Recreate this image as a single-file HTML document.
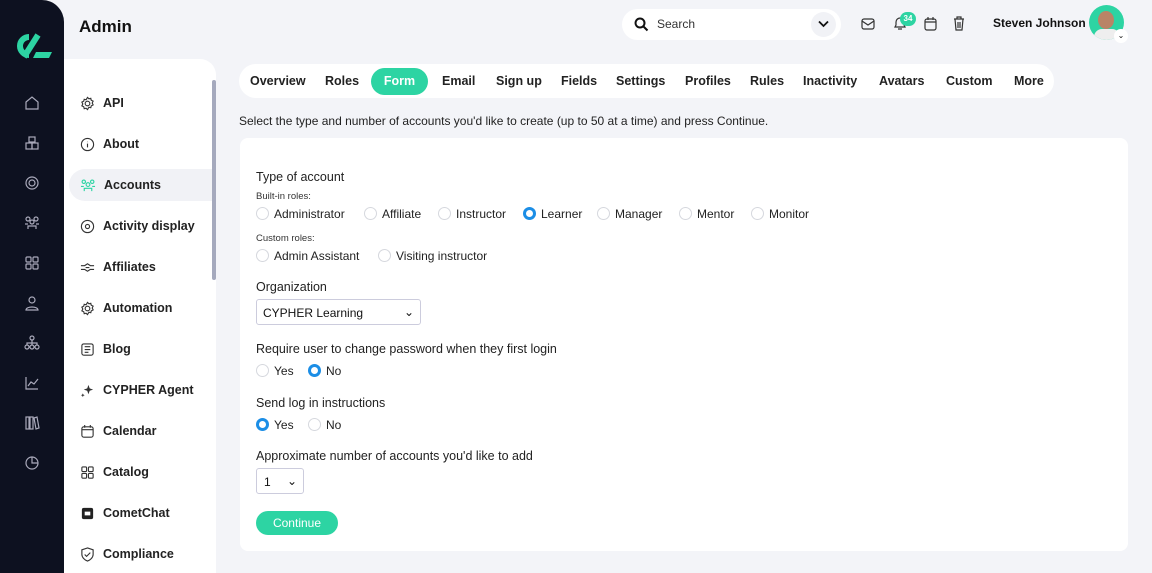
<!DOCTYPE html>
<html><head><style>
*{margin:0;padding:0;box-sizing:border-box}
body{width:1152px;height:573px;overflow:hidden;background:#f3f4f8;font-family:"Liberation Sans",sans-serif;color:#111;position:relative;font-size:13px}
.abs{position:absolute}
.side{left:0;top:0;width:64px;height:573px;background:#0d1120;border-top-right-radius:22px}
.si{position:absolute;left:24px;width:16px;height:16px}
.menu{left:64px;top:59px;width:152px;height:514px;background:#fff;border-top-right-radius:16px}
.mi{position:absolute;left:16px;height:32px;width:136px;display:flex;align-items:center;font-size:12.5px;font-weight:bold;color:#222}
.mi svg{margin-right:8px;margin-left:0}
.mi.act{background:#f1f2f6;border-radius:16px 0 0 16px;left:5px;padding-left:11px;width:143px}
.tabs{left:239px;top:64px;width:815px;height:34px;background:#fff;border-radius:17px}
.tab{position:absolute;top:10px;font-size:12.5px;font-weight:bold;color:#222}
.card{left:240px;top:138px;width:888px;height:413px;background:#fff;border-radius:8px}
.lbl{position:absolute;font-size:12.5px;color:#222}
.sm{position:absolute;font-size:9.5px;color:#333}
.r{position:absolute;width:13px;height:13px;border:1px solid #d6d8de;border-radius:50%;background:#fff}
.r.on{border:3.5px solid #1c8ee6}
.rl{position:absolute;font-size:12px;color:#222}
</style></head><body>
<div class="abs side">
<svg class="abs" style="left:12px;top:33px" width="40" height="26" viewBox="0 0 40 26"><path d="M17 4 A9 9 0 1 0 17 22" fill="none" stroke="#2dd4a3" stroke-width="6"/><path d="M26 2 L12 24" stroke="#2dd4a3" stroke-width="6"/><path d="M24 19 H40 L37 25 H21Z" fill="#2dd4a3"/></svg>
<svg class="si" style="top:95px" viewBox="0 0 16 16" fill="none" stroke="#aab" stroke-width="1.2"><path d="M2 7 8 2l6 5v7H2z"/></svg>
<svg class="si" style="top:135px" viewBox="0 0 16 16" fill="none" stroke="#aab" stroke-width="1.2"><rect x="5" y="2" width="6" height="5"/><rect x="2" y="8" width="6" height="6"/><rect x="8" y="8" width="6" height="6"/></svg>
<svg class="si" style="top:175px" viewBox="0 0 16 16" fill="none" stroke="#aab" stroke-width="1.2"><circle cx="8" cy="8" r="6"/><circle cx="8" cy="8" r="3"/></svg>
<svg class="si" style="top:215px" viewBox="0 0 16 16" fill="none" stroke="#aab" stroke-width="1.2"><circle cx="4" cy="4" r="2"/><circle cx="12" cy="4" r="2"/><circle cx="8" cy="7" r="2"/><path d="M4 14v-3h8v3M1 9h3M12 9h3"/></svg>
<svg class="si" style="top:255px" viewBox="0 0 16 16" fill="none" stroke="#aab" stroke-width="1.2"><rect x="2" y="2" width="5" height="5" rx="1"/><rect x="9" y="2" width="5" height="5" rx="1"/><rect x="2" y="9" width="5" height="5" rx="1"/><rect x="9" y="9" width="5" height="5" rx="1"/></svg>
<svg class="si" style="top:295px" viewBox="0 0 16 16" fill="none" stroke="#aab" stroke-width="1.2"><circle cx="8" cy="5" r="3"/><path d="M2 15c0-4 12-4 12 0z"/></svg>
<svg class="si" style="top:335px" viewBox="0 0 16 16" fill="none" stroke="#aab" stroke-width="1.2"><circle cx="8" cy="3" r="2"/><circle cx="3" cy="12" r="2"/><circle cx="8" cy="12" r="2"/><circle cx="13" cy="12" r="2"/><path d="M8 5v5M3 10V8h10v2"/></svg>
<svg class="si" style="top:375px" viewBox="0 0 16 16" fill="none" stroke="#aab" stroke-width="1.2"><path d="M2 2v12h12M4 11l3-4 3 2 4-5"/></svg>
<svg class="si" style="top:415px" viewBox="0 0 16 16" fill="none" stroke="#aab" stroke-width="1.2"><rect x="2" y="2" width="3" height="12"/><rect x="6" y="2" width="3" height="12"/><path d="M10 3l3-1 2 11-3 1z"/></svg>
<svg class="si" style="top:455px" viewBox="0 0 16 16" fill="none" stroke="#aab" stroke-width="1.2"><circle cx="8" cy="8" r="6"/><path d="M8 2v6h6"/></svg>
</div>
<div class="abs" style="left:79px;top:17px;font-size:17px;font-weight:bold">Admin</div>
<div class="abs" style="left:622px;top:9px;width:219px;height:31px;background:#fff;border-radius:16px">
<svg class="abs" style="left:12px;top:8px" width="15" height="15" viewBox="0 0 15 15" fill="none" stroke="#111" stroke-width="2"><circle cx="6" cy="6" r="4.5"/><path d="M9.5 9.5l4 4"/></svg>
<span class="abs" style="left:35px;top:8px;font-size:12px;color:#333">Search</span>
<div class="abs" style="left:189px;top:3px;width:25px;height:25px;border-radius:50%;background:#f1f2f6"></div>
<svg class="abs" style="left:196px;top:11px" width="11" height="8" viewBox="0 0 11 8" fill="none" stroke="#111" stroke-width="1.8"><path d="M1 1.5l4.5 4.5 4.5-4.5"/></svg>
</div>
<svg class="abs" style="left:861px;top:18px" width="14" height="12" viewBox="0 0 14 12" fill="none" stroke="#333" stroke-width="1.2"><rect x="1" y="1" width="12" height="10" rx="2"/><path d="M1 3l6 4 6-4"/></svg>
<svg class="abs" style="left:893px;top:16px" width="14" height="15" viewBox="0 0 14 15" fill="none" stroke="#333" stroke-width="1.2"><path d="M2 11h10l-1-2V6a4 4 0 0 0-8 0v3z M5 13h4"/></svg>
<div class="abs" style="left:900px;top:12px;width:16px;height:14px;border-radius:7px;background:#2dd4a3;color:#fff;font-size:8px;font-weight:bold;text-align:center;line-height:14px">34</div>
<svg class="abs" style="left:924px;top:16px" width="13" height="15" viewBox="0 0 13 15" fill="none" stroke="#333" stroke-width="1.2"><rect x="1" y="3" width="11" height="11" rx="2"/><path d="M1 6h11M4 1v3M9 1v3"/></svg>
<svg class="abs" style="left:953px;top:16px" width="12" height="15" viewBox="0 0 12 15" fill="none" stroke="#333" stroke-width="1.2"><path d="M1 3h10M4 3V1h4v2M2 3l1 11h6l1-11M5 6v6M7 6v6"/></svg>
<div class="abs" style="left:993px;top:16px;font-size:12px;font-weight:bold">Steven Johnson</div>
<div class="abs" style="left:1089px;top:5px;width:35px;height:35px;border-radius:50%;background:#2dd4a3;overflow:hidden"><div style="position:absolute;left:9px;top:6px;width:16px;height:18px;border-radius:50%;background:#b98466"></div><div style="position:absolute;left:5px;top:24px;width:26px;height:16px;border-radius:8px;background:#eee"></div></div>
<div class="abs" style="left:1114px;top:29px;width:14px;height:14px;border-radius:50%;background:#fff;font-size:8px;text-align:center;line-height:14px">⌄</div>

<div class="abs menu">
<div class="mi" style="top:28px"><svg width="15" height="15" viewBox="0 0 16 16" fill="none" stroke="#333" stroke-width="1.2"><circle cx="8" cy="8" r="2.5"/><path d="M8 1.5l1.5 1.5 2-.5.5 2 2 1-1 2 1 2-2 1-.5 2-2-.5L8 14.5 6.5 13l-2 .5-.5-2-2-1 1-2-1-2 2-1 .5-2 2 .5z"/></svg>API</div>
<div class="mi" style="top:69px"><svg width="15" height="15" viewBox="0 0 16 16" fill="none" stroke="#333" stroke-width="1.2"><circle cx="8" cy="8" r="6.5"/><path d="M8 7v4M8 5v.5"/></svg>About</div>
<div class="mi act" style="top:110px"><svg width="16" height="15" viewBox="0 0 16 16" fill="none" stroke="#2dd4a3" stroke-width="1.2"><circle cx="3.5" cy="4" r="1.8"/><circle cx="12.5" cy="4" r="1.8"/><circle cx="8" cy="7" r="2"/><path d="M4 14v-3h8v3M0.5 9h3M12.5 9h3"/></svg>Accounts</div>
<div class="mi" style="top:151px"><svg width="15" height="15" viewBox="0 0 16 16" fill="none" stroke="#333" stroke-width="1.2"><circle cx="8" cy="8" r="6.5"/><circle cx="8" cy="8" r="2.2"/></svg>Activity display</div>
<div class="mi" style="top:192px"><svg width="15" height="15" viewBox="0 0 16 16" fill="none" stroke="#333" stroke-width="1.2"><path d="M1 6h4l3-2 3 2h4M1 10h4l3 2 3-2h4M6 8h4"/></svg>Affiliates</div>
<div class="mi" style="top:233px"><svg width="15" height="15" viewBox="0 0 16 16" fill="none" stroke="#333" stroke-width="1.2"><circle cx="8" cy="8" r="2.5"/><path d="M8 1.5l1.5 1.5 2-.5.5 2 2 1-1 2 1 2-2 1-.5 2-2-.5L8 14.5 6.5 13l-2 .5-.5-2-2-1 1-2-1-2 2-1 .5-2 2 .5z"/></svg>Automation</div>
<div class="mi" style="top:274px"><svg width="15" height="15" viewBox="0 0 16 16" fill="none" stroke="#333" stroke-width="1.2"><rect x="2" y="2" width="12" height="12" rx="2"/><path d="M5 5h6M5 8h6M5 11h4"/></svg>Blog</div>
<div class="mi" style="top:315px"><svg width="15" height="15" viewBox="0 0 16 16" fill="#333"><path d="M9 2l1.3 3.7L14 7l-3.7 1.3L9 12 7.7 8.3 4 7l3.7-1.3z"/><path d="M3 11l.6 1.4L5 13l-1.4.6L3 15l-.6-1.4L1 13l1.4-.6z"/></svg>CYPHER Agent</div>
<div class="mi" style="top:356px"><svg width="15" height="15" viewBox="0 0 16 16" fill="none" stroke="#333" stroke-width="1.2"><rect x="2" y="3" width="12" height="11" rx="2"/><path d="M2 6h12M5 1v3M11 1v3"/></svg>Calendar</div>
<div class="mi" style="top:397px"><svg width="15" height="15" viewBox="0 0 16 16" fill="none" stroke="#333" stroke-width="1.2"><rect x="2" y="2" width="5" height="5" rx="1"/><rect x="9" y="2" width="5" height="5" rx="1"/><rect x="2" y="9" width="5" height="5" rx="1"/><rect x="9" y="9" width="5" height="5" rx="1"/></svg>Catalog</div>
<div class="mi" style="top:438px"><svg width="15" height="15" viewBox="0 0 16 16" fill="#222"><rect x="2" y="2" width="12" height="12" rx="2"/><rect x="5" y="6" width="6" height="4" fill="#fff"/></svg>CometChat</div>
<div class="mi" style="top:479px"><svg width="15" height="15" viewBox="0 0 16 16" fill="none" stroke="#333" stroke-width="1.2"><path d="M8 1l6 2v5c0 3-3 6-6 7-3-1-6-4-6-7V3z M5 8l2 2 4-4"/></svg>Compliance</div>
<div class="abs" style="left:148px;top:21px;width:4px;height:200px;background:#a5a9bd;border-radius:2px"></div>
</div>

<div class="abs tabs">
<span class="tab" style="left:11px">Overview</span>
<span class="tab" style="left:86px">Roles</span>
<div class="abs" style="left:132px;top:4px;width:57px;height:27px;border-radius:14px;background:#2dd4a3;color:#fff;font-size:12.5px;font-weight:bold;text-align:center;line-height:27px">Form</div>
<span class="tab" style="left:203px">Email</span>
<span class="tab" style="left:257px">Sign up</span>
<span class="tab" style="left:322px">Fields</span>
<span class="tab" style="left:377px">Settings</span>
<span class="tab" style="left:446px">Profiles</span>
<span class="tab" style="left:511px">Rules</span>
<span class="tab" style="left:564px">Inactivity</span>
<span class="tab" style="left:640px">Avatars</span>
<span class="tab" style="left:707px">Custom</span>
<span class="tab" style="left:775px">More</span>
</div>
<div class="abs" style="left:239px;top:114px;font-size:12px;color:#222">Select the type and number of accounts you'd like to create (up to 50 at a time) and press Continue.</div>

<div class="abs card"></div>
<div class="lbl" style="left:256px;top:170px">Type of account</div>
<div class="sm" style="left:256px;top:191px">Built-in roles:</div>
<div class="r" style="left:256px;top:207px"></div><div class="rl" style="left:274px;top:207px">Administrator</div>
<div class="r" style="left:364px;top:207px"></div><div class="rl" style="left:382px;top:207px">Affiliate</div>
<div class="r" style="left:438px;top:207px"></div><div class="rl" style="left:456px;top:207px">Instructor</div>
<div class="r on" style="left:523px;top:207px"></div><div class="rl" style="left:541px;top:207px">Learner</div>
<div class="r" style="left:597px;top:207px"></div><div class="rl" style="left:615px;top:207px">Manager</div>
<div class="r" style="left:679px;top:207px"></div><div class="rl" style="left:697px;top:207px">Mentor</div>
<div class="r" style="left:751px;top:207px"></div><div class="rl" style="left:769px;top:207px">Monitor</div>
<div class="sm" style="left:256px;top:233px">Custom roles:</div>
<div class="r" style="left:256px;top:249px"></div><div class="rl" style="left:274px;top:249px">Admin Assistant</div>
<div class="r" style="left:378px;top:249px"></div><div class="rl" style="left:396px;top:249px">Visiting instructor</div>
<div class="lbl" style="left:256px;top:280px">Organization</div>
<div class="abs" style="left:256px;top:299px;width:165px;height:26px;border:1px solid #ccd;border-radius:3px;font-size:12px;padding:6px 6px">CYPHER Learning<span style="position:absolute;right:6px;top:5px">⌄</span></div>
<div class="lbl" style="left:256px;top:342px">Require user to change password when they first login</div>
<div class="r" style="left:256px;top:364px"></div><div class="rl" style="left:274px;top:364px">Yes</div>
<div class="r on" style="left:308px;top:364px"></div><div class="rl" style="left:326px;top:364px">No</div>
<div class="lbl" style="left:256px;top:396px">Send log in instructions</div>
<div class="r on" style="left:256px;top:418px"></div><div class="rl" style="left:274px;top:418px">Yes</div>
<div class="r" style="left:308px;top:418px"></div><div class="rl" style="left:326px;top:418px">No</div>
<div class="lbl" style="left:256px;top:449px">Approximate number of accounts you'd like to add</div>
<div class="abs" style="left:256px;top:468px;width:48px;height:26px;border:1px solid #ccd;border-radius:3px;font-size:12px;padding:6px 7px">1<span style="position:absolute;right:6px;top:5px">⌄</span></div>
<div class="abs" style="left:256px;top:511px;width:82px;height:24px;border-radius:12px;background:#2dd4a3;color:#fff;font-size:12px;text-align:center;line-height:24px">Continue</div>
</body></html>
